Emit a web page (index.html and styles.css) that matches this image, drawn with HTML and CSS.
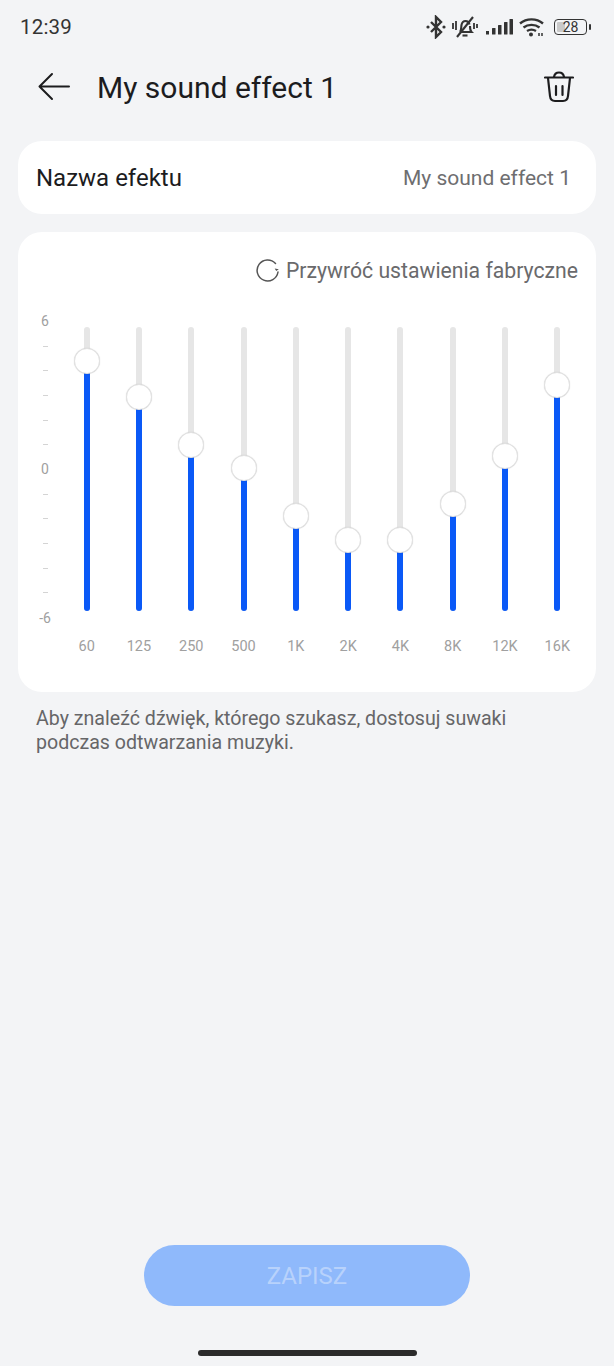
FILE: index.html
```html
<!DOCTYPE html>
<html>
<head>
    <meta charset="UTF-8">
    <title>My sound effect 1</title>
    <link rel="stylesheet" href="styles.css">
</head>
<body>
    <div class="screen">
        <div class="status-bar">
            <span class="clock">12:39</span>
            <div class="status-icons">
                <svg width="20" height="24" viewBox="0 0 20 24" fill="none" stroke="#333" stroke-width="2.400"><path d="M5 7l10 10-5 5V2l5 5L5 17"/><circle cx="2" cy="12" r="1.6" fill="#333" stroke="none"/><circle cx="18" cy="12" r="1.6" fill="#333" stroke="none"/></svg>
                <svg class="icon-bell" width="26" height="24" viewBox="0 0 26 24" fill="none" stroke="#333" stroke-width="2.100"><path d="M8 17c1.500-2 1-4 1.500-7 .5-2.500 2-4 4-4s3.500 1.500 4 3.500M18 11c0 2.500 0 4.500 1.500 6H9"/><path d="M10.500 20.500h5"/><path d="M5 22L21 2"/><path d="M1 8v6M4 6v9M22 8v6M25 9v4" stroke-width="1.800"/></svg>
                <svg class="icon-signal" width="27" height="18" viewBox="0 0 27 18" fill="#333"><rect x="0" y="13" width="3" height="3.500"/><rect x="6" y="10" width="3.500" height="6.500" rx=".5"/><rect x="12" y="7" width="3.500" height="9.500" rx=".5"/><rect x="18" y="4" width="3.500" height="12.500" rx=".5"/><rect x="23.500" y="1" width="3.500" height="15.500" rx=".5"/></svg>
                <svg class="icon-wifi" width="26" height="20" viewBox="0 0 26 20" fill="none" stroke="#333" stroke-width="2.400"><path d="M1 6.500C7.500 1 17.500 1 24 6.500"/><path d="M4.500 10.500c4.500-3.500 11.500-3.500 16 0"/><path d="M8 14c2.500-1.500 6.500-1.500 9 0"/><circle cx="12" cy="17.500" r="2" fill="#333" stroke="none"/><path d="M20 16v3M23 16v3" stroke-width="1.500"/></svg>
                <div class="battery">
                    <div class="battery-body"><span class="battery-level"></span><span class="battery-text">28</span></div>
                    <span class="battery-tip"></span>
                </div>
            </div>
        </div>

        <div class="title-bar">
            <svg class="back" width="32" height="30" viewBox="0 0 32 30" fill="none" stroke="#1c1c1e" stroke-width="2" stroke-linecap="round" stroke-linejoin="round"><path d="M31 14.500H1.500M14 2L1.500 14.500 14 27"/></svg>
            <h1>My sound effect 1</h1>
            <svg class="trash" width="30" height="32" viewBox="0 0 30 32" fill="none" stroke="#1c1c1e" stroke-width="2.200" stroke-linecap="round" stroke-linejoin="round"><path d="M1 6.500h28"/><path d="M10 6C10.500 3 12.500 1.500 15 1.500s4.500 1.500 5 4.500"/><path d="M4 7l2 18c.3 3 2 5 5 5h8c3 0 4.700-2 5-5l2-18"/><path d="M12 15v9M18.500 15v9"/></svg>
        </div>

        <div class="card name-card">
            <span class="name-label">Nazwa efektu</span>
            <span class="name-value">My sound effect 1</span>
        </div>

        <div class="card eq-card">
            <div class="reset">
                <svg width="24" height="24" viewBox="0 0 24 24" fill="none" stroke="#555" stroke-width="1.500" stroke-linecap="round"><path d="M19.500 5.500A10.500 10.500 0 1 0 22 14"/><path d="M22.800 11.200l-2.600 1.900-1.500-2.700z" fill="#555" stroke="none"/></svg>
                <span>Przywróć ustawienia fabryczne</span>
            </div>
            <div class="eq">
                <div class="scale">
                    <span class="scale-row"><span class="scale-num">6</span></span>
                    <span class="scale-row"><span class="tick"></span></span>
                    <span class="scale-row"><span class="tick"></span></span>
                    <span class="scale-row"><span class="tick"></span></span>
                    <span class="scale-row"><span class="tick"></span></span>
                    <span class="scale-row"><span class="tick"></span></span>
                    <span class="scale-row"><span class="scale-num">0</span></span>
                    <span class="scale-row"><span class="tick"></span></span>
                    <span class="scale-row"><span class="tick"></span></span>
                    <span class="scale-row"><span class="tick"></span></span>
                    <span class="scale-row"><span class="tick"></span></span>
                    <span class="scale-row"><span class="tick"></span></span>
                    <span class="scale-row"><span class="scale-num">-6</span></span>
                </div>
                <div class="bands">
                    <div class="band"><div class="track"><div class="fill" style="height: 250px"></div><div class="thumb" style="bottom: 237px"></div></div><span class="freq">60</span></div>
                    <div class="band"><div class="track"><div class="fill" style="height: 214px"></div><div class="thumb" style="bottom: 201px"></div></div><span class="freq">125</span></div>
                    <div class="band"><div class="track"><div class="fill" style="height: 166px"></div><div class="thumb" style="bottom: 153px"></div></div><span class="freq">250</span></div>
                    <div class="band"><div class="track"><div class="fill" style="height: 143px"></div><div class="thumb" style="bottom: 130px"></div></div><span class="freq">500</span></div>
                    <div class="band"><div class="track"><div class="fill" style="height: 95px"></div><div class="thumb" style="bottom: 82px"></div></div><span class="freq">1K</span></div>
                    <div class="band"><div class="track"><div class="fill" style="height: 71px"></div><div class="thumb" style="bottom: 58px"></div></div><span class="freq">2K</span></div>
                    <div class="band"><div class="track"><div class="fill" style="height: 71px"></div><div class="thumb" style="bottom: 58px"></div></div><span class="freq">4K</span></div>
                    <div class="band"><div class="track"><div class="fill" style="height: 107px"></div><div class="thumb" style="bottom: 94px"></div></div><span class="freq">8K</span></div>
                    <div class="band"><div class="track"><div class="fill" style="height: 155px"></div><div class="thumb" style="bottom: 142px"></div></div><span class="freq">12K</span></div>
                    <div class="band"><div class="track"><div class="fill" style="height: 226px"></div><div class="thumb" style="bottom: 213px"></div></div><span class="freq">16K</span></div>
                </div>
            </div>
        </div>

        <p class="hint">Aby znaleźć dźwięk, którego szukasz, dostosuj suwaki podczas odtwarzania muzyki.</p>

        <div class="footer">
            <button class="save" type="button">ZAPISZ</button>
            <div class="home-bar"></div>
        </div>
    </div>
</body>
</html>
```

FILE: styles.css
```css
* {
    box-sizing: border-box;
}

html, body {
    margin: 0;
    padding: 0;
}

body {
    font-family: Roboto, "Liberation Sans", sans-serif;
    background-color: #f3f4f6;
    color: #1c1c1e;
}

.screen {
    width: 614px;
    height: 1366px;
    display: flex;
    flex-direction: column;
    overflow: hidden;
}

/* Status bar */
.status-bar {
    height: 54px;
    padding: 0 23px 0 20px;
    display: flex;
    align-items: center;
    justify-content: space-between;
}

.clock {
    font-size: 20.5px;
    color: #333;
    letter-spacing: 0.2px;
}

.status-icons {
    display: flex;
    align-items: center;
    gap: 6px;
}

.icon-signal {
    margin-left: 2px;
}

.battery {
    display: flex;
    align-items: center;
    gap: 2px;
    margin-left: 3px;
}

.battery-body {
    position: relative;
    width: 33px;
    height: 16px;
    border: 1.5px solid #333;
    border-radius: 4px;
    display: flex;
    align-items: center;
    justify-content: center;
}

.battery-level {
    position: absolute;
    left: 2px;
    top: 2px;
    bottom: 2px;
    width: 8px;
    background: #c9c9c9;
    border-radius: 1px;
}

.battery-text {
    position: relative;
    font-size: 14px;
    color: #333;
}

.battery-tip {
    width: 2px;
    height: 6px;
    background: #333;
    border-radius: 1px;
}

/* Title bar */
.title-bar {
    height: 68px;
    padding: 0 40px 2px 38px;
    display: flex;
    align-items: center;
}

.title-bar h1 {
    flex: 1;
    margin: 0 0 0 27px;
    font-size: 30px;
    font-weight: 400;
}

.card {
    background: #fff;
    border-radius: 24px;
    margin: 0 18px;
}

.name-card {
    margin-top: 19px;
    height: 73px;
    padding: 0 25px 0 18px;
    display: flex;
    align-items: center;
    justify-content: space-between;
}

.name-label {
    font-size: 24px;
}

.name-value {
    font-size: 21px;
    color: #6e6e70;
}

.eq-card {
    margin-top: 18px;
    height: 460px;
    padding: 24px 18px 0 18px;
}

.reset {
    height: 28px;
    display: flex;
    align-items: center;
    justify-content: flex-end;
    gap: 6px;
    font-size: 21.2px;
    color: #6a6a6c;
}

/* Equalizer */
.eq {
    display: flex;
    margin-top: 43px;
}

.scale {
    width: 18px;
    height: 321px;
    margin-top: -18px;
    display: flex;
    flex-direction: column;
}

.scale-row {
    flex: 1;
    display: flex;
    align-items: center;
    justify-content: center;
}

.scale-num {
    font-size: 14px;
    line-height: 16px;
    color: #a0a0a0;
}

.tick {
    width: 5px;
    height: 1px;
    background: #d4d4d4;
}

.bands {
    flex: 1;
    display: flex;
    margin-left: 6.5px;
    margin-right: -5.5px;
}

.band {
    flex: 1;
    display: flex;
    flex-direction: column;
    align-items: center;
}

.track {
    position: relative;
    width: 6px;
    height: 284px;
    background: #e6e6e6;
    border-radius: 3px;
}

.fill {
    position: absolute;
    left: 0;
    right: 0;
    bottom: 0;
    background: #0a59f7;
    border-radius: 0 0 3px 3px;
}

.thumb {
    position: absolute;
    left: -10px;
    width: 26px;
    height: 26px;
    background: #fff;
    border: 1.5px solid #e2e2e2;
    border-radius: 50%;
    box-shadow: 0 0 1px rgba(0, 0, 0, 0.2);
}

.freq {
    margin-top: 27px;
    font-size: 14.5px;
    line-height: 18px;
    color: #a0a0a0;
}

.hint {
    margin: 15px 60px 0 36px;
    font-size: 19.6px;
    line-height: 24px;
    color: #666668;
}

/* Bottom */
.footer {
    margin-top: auto;
    display: flex;
    flex-direction: column;
    align-items: center;
}

.save {
    width: 326px;
    height: 61px;
    border: none;
    border-radius: 31px;
    background: #8fb9fb;
    color: #b8d2fb;
    font-family: inherit;
    font-size: 24px;
}

.home-bar {
    width: 219px;
    height: 6px;
    margin: 44px 0 10px;
    background: #2b2b2b;
    border-radius: 3px;
}
```
